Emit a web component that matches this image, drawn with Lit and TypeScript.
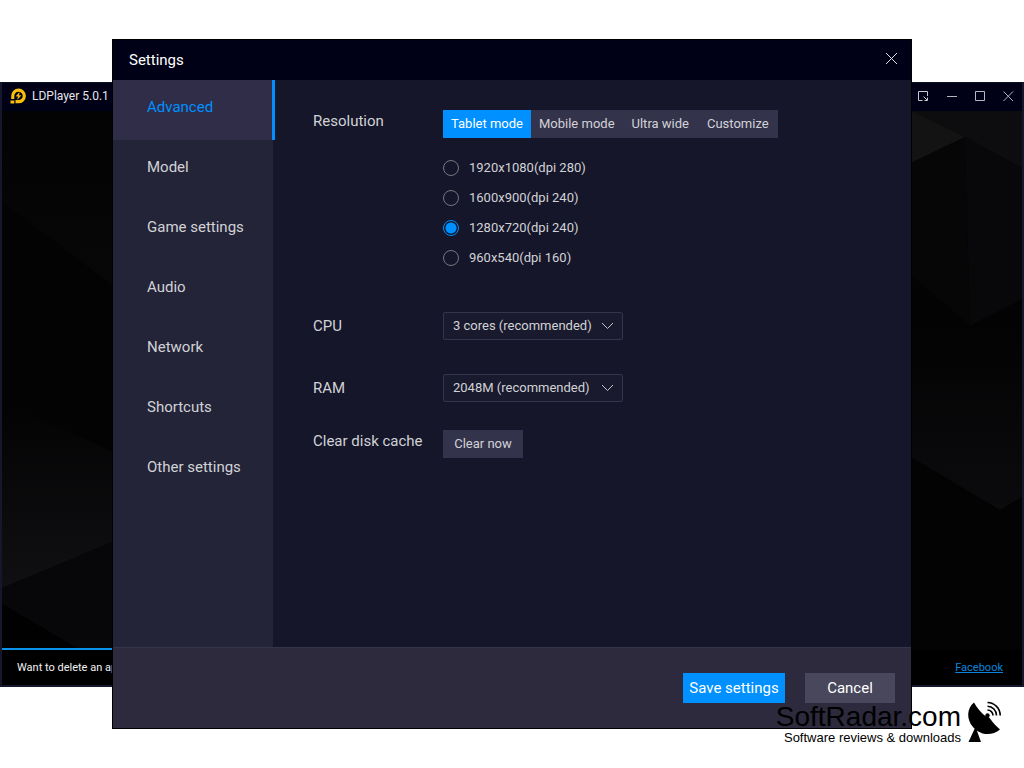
import { LitElement, html, css, svg } from "lit";
import { customElement, state } from "lit/decorators.js";

const SECTIONS = ["Advanced", "Model", "Game settings", "Audio", "Network", "Shortcuts", "Other settings"];
const MODES = ["Tablet mode", "Mobile mode", "Ultra wide", "Customize"];
const RESOLUTIONS = ["1920x1080(dpi 280)", "1600x900(dpi 240)", "1280x720(dpi 240)", "960x540(dpi 160)"];

@customElement("emulator-window")
class EmulatorWindow extends LitElement {
  static styles = css`
    :host { display: block; box-sizing: border-box; background: #000; border: 2px solid #15172c; border-top: 1px solid #0a1420; font: 12px/16px Roboto, sans-serif; color: #e6e6e6; }
    .bar { display: flex; align-items: center; height: 28px; box-sizing: border-box; padding: 0 6px 2px 8px; background: #000016; }
    .logo { width: 16px; height: 16px; display: block; }
    .name { flex: 1; padding-left: 6px; }
    .tools { display: flex; gap: 12px; }
    .tool { border: 0; background: none; padding: 0; width: 16px; height: 16px; }
    .tool svg { display: block; }
    .screen { display: block; width: 100%; height: 539px; background: #030304; }
    .hint { display: flex; justify-content: space-between; align-items: center; height: 35px; padding: 0 19px 0 15px; font-size: 11px; background: #000; color: #f2f2f2; }
    .progress { height: 2px; width: 50%; background: #0a93ea; margin-top: -2px; position: relative; }
    a { color: #0a84dd; }
  `;
  render() {
    return html`
      <header class="bar">
        <svg class="logo" viewBox="0 0 16 16" aria-hidden="true">
          <path fill-rule="evenodd" d="M8.500 0.500a7.300 7.300 0 1 1 0 14.800H5.500v-3.200h3a4.200 4.200 0 1 0-4.200-4.200v3H1.200v-3A7.300 7.300 0 0 1 8.500 0.500zM0.500 12.500h3.800v3H0.500z" fill="#f8bf0c"/>
          <path d="M9.300 4.500L6 8.200h2.200L7.600 11.300 11 7.600H8.800z" fill="#f8bf0c" stroke="#f8bf0c" stroke-width=".4"/>
        </svg>
        <span class="name">LDPlayer 5.0.1</span>
        <div class="tools">
          <button class="tool" aria-label="Resize">${svg`<svg width="16" height="16" viewBox="0 0 16 16" fill="none" stroke="#c8c8d0"><path d="M6.500 12.500H2.500v-9h9V8M7.500 8.500l3.500 3.500M11.500 9.500v3h-3"/></svg>`}</button>
          <button class="tool" aria-label="Minimize">${svg`<svg width="16" height="16" viewBox="0 0 16 16" stroke="#b4b4bc"><path d="M3 8.500h10"/></svg>`}</button>
          <button class="tool" aria-label="Maximize">${svg`<svg width="16" height="16" viewBox="0 0 16 16" fill="none" stroke="#b4b4bc"><path d="M3.500 3.500h9v9h-9z"/></svg>`}</button>
          <button class="tool" aria-label="Close">${svg`<svg width="16" height="16" viewBox="0 0 16 16" stroke="#b4b4bc"><path d="M3.500 3.500l9.500 9.500M13 3.500L3.500 13"/></svg>`}</button>
        </div>
      </header>
      <svg class="screen" viewBox="0 0 1020 538" preserveAspectRatio="none" aria-hidden="true">
        <defs>
          <linearGradient id="a" x1="0" y1="0" x2="0" y2="1"><stop offset="0" stop-color="#030304"/><stop offset="1" stop-color="#101012"/></linearGradient>
          <linearGradient id="b" x1="0" y1="0" x2="0" y2="1"><stop offset="0" stop-color="#030304"/><stop offset="1" stop-color="#0b0b0d"/></linearGradient>
          <linearGradient id="c" x1="0" y1="0" x2="0" y2="1"><stop offset="0" stop-color="#030304"/><stop offset="1" stop-color="#070708"/></linearGradient>
        </defs>
        <path d="M0 0H111V174L0 90z" fill="url(#c)"/>
        <path d="M0 290L111 340V430L0 476z" fill="url(#a)"/>
        <path d="M0 476L111 430V538H78L0 492z" fill="#070709"/>
        <path d="M0 492L78 538H0z" fill="#010101"/>
        <path d="M909 0H1020V57L963 26L909 52z" fill="#0d0d0f"/>
        <path d="M909 0L963 26L909 52z" fill="#131314"/>
        <path d="M909 52L963 26L968 214L909 164z" fill="#060607"/>
        <path d="M963 26L1020 57V188L968 214z" fill="#08080a"/>
        <path d="M909 214H1020V385L998 398L909 345z" fill="url(#b)"/>
      </svg>
      <div class="progress"></div>
      <footer class="hint"><span>Want to delete an app?</span><a href="#facebook">Facebook</a></footer>
    `;
  }
}

@customElement("settings-dialog")
class SettingsDialog extends LitElement {
  @state() section = SECTIONS[0];
  @state() mode = MODES[0];
  @state() resolution = RESOLUTIONS[2];

  static styles = css`
    :host { display: block; box-sizing: border-box; border: 1px solid #000; background: #15162a; color: #d2d2d6; font: 15px/20px Roboto, sans-serif; }
    button, select, input { font: inherit; color: inherit; margin: 0; border: 0; border-radius: 0; }
    .title { display: flex; align-items: center; justify-content: space-between; height: 40px; padding: 0 12px 0 16px; background: #000016; color: #fff; }
    h1 { font: inherit; margin: 0; }
    .close { background: none; padding: 0; width: 16px; height: 16px; }
    .close svg { display: block; }
    .body { display: grid; grid-template-columns: 160px 1fr; min-height: 567px; }
    nav { background: #232438; display: flex; flex-direction: column; }
    .item { height: 60px; padding: 0 0 6px 34px; text-align: left; background: none; }
    .item.on { background: #2f2d47; color: #0090ff; border-right: 3px solid #0090ff; margin-right: -2px; }
    .form { display: grid; grid-template-columns: 130px 1fr; align-content: start; padding: 30px 40px; font-size: 13px; }
    .label { font-size: 15px; line-height: 22px; margin: 0; padding: 0; }
    label.label { line-height: 28px; }
    .modes { display: flex; height: 28px; width: fit-content; background: #34334c; }
    .mode { padding: 0 8px; background: none; }
    .mode.on { background: #0090ff; color: #fff; }
    .mode:nth-child(n + 3) { padding: 0 9px; }
    .radios { display: grid; grid-auto-rows: 30px; padding: 15px 0 39px; }
    .radio { display: flex; align-items: center; gap: 10px; }
    .radio input { appearance: none; width: 16px; height: 16px; box-sizing: border-box; border: 1px solid #77777f; border-radius: 50%; }
    .radio input:checked { border-color: #0090ff; background: radial-gradient(circle, #0090ff 5px, transparent 6px); }
    .pick { display: grid; width: 180px; height: 28px; align-items: center; margin-bottom: 34px; }
    .pick.last { margin-bottom: 28px; }
    .pick select, .pick svg { grid-area: 1 / 1; }
    .pick select { appearance: none; width: 100%; height: 28px; padding: 0 28px 0 9px; background: #191a2d; border: 1px solid #34354a; border-radius: 2px; }
    .pick svg { justify-self: end; margin-right: 9px; pointer-events: none; }
    .clear { width: 80px; height: 28px; padding: 0; background: #34334c; }
    .actions { display: flex; justify-content: flex-end; gap: 20px; padding: 25px 16px; border-top: 1px solid #353448; background: #2c2a3c; color: #fff; }
    .action { height: 30px; padding: 0; width: 90px; background: #48475c; }
    .action.save { width: 102px; background: #0090ff; }
  `;

  select(id: string, label: string, options: string[], last = false) {
    return html`
      <label class="label" for=${id}>${label}</label>
      <div class="pick ${last ? "last" : ""}">
        <select id=${id}>${options.map((o) => html`<option>${o}</option>`)}</select>
        <svg width="13" height="8" viewBox="0 0 13 8" fill="none" stroke="#c4c4cc"><path d="M1 1l5.500 5.500L12 1"/></svg>
      </div>`;
  }

  render() {
    return html`
      <header class="title">
        <h1>Settings</h1>
        <button class="close" aria-label="Close"><svg width="16" height="16" viewBox="0 0 16 16" stroke="#e4e4e8"><path d="M3 1l11 11M14 1L3 12"/></svg></button>
      </header>
      <div class="body">
        <nav>${SECTIONS.map((s) => html`<button class="item ${s === this.section ? "on" : ""}" @click=${() => (this.section = s)}>${s}</button>`)}</nav>
        <section class="form">
          <p class="label">Resolution</p>
          <div>
            <div class="modes">${MODES.map((m) => html`<button class="mode ${m === this.mode ? "on" : ""}" @click=${() => (this.mode = m)}>${m}</button>`)}</div>
            <div class="radios" role="radiogroup" aria-label="Resolution">
              ${RESOLUTIONS.map((r) => html`<label class="radio"><input type="radio" name="resolution" .checked=${r === this.resolution} @change=${() => (this.resolution = r)} />${r}</label>`)}
            </div>
          </div>
          ${this.select("cpu", "CPU", ["3 cores (recommended)"])}
          ${this.select("ram", "RAM", ["2048M (recommended)"], true)}
          <p class="label">Clear disk cache</p>
          <div><button class="clear">Clear now</button></div>
        </section>
      </div>
      <footer class="actions">
        <button class="action save">Save settings</button>
        <button class="action">Cancel</button>
      </footer>
    `;
  }
}

@customElement("app-root")
class AppRoot extends LitElement {
  static styles = css`
    :host { display: block; position: relative; min-height: 100vh; background: #fff; overflow: hidden; }
    emulator-window { margin-top: 82px; }
    settings-dialog { position: absolute; top: 39px; left: 112px; right: 112px; }
    .mark { position: absolute; top: 701px; right: 22px; display: flex; align-items: flex-start; gap: 5px; color: #000; font-family: "Liberation Sans", Arial, sans-serif; text-align: right; }
    .brand { font-size: 28px; line-height: 32px; }
    .tag { font-size: 13px; line-height: 10px; }
  `;
  render() {
    return html`
      <emulator-window></emulator-window>
      <settings-dialog></settings-dialog>
      <div class="mark">
        <div><div class="brand">SoftRadar.com</div><div class="tag">Software reviews &amp; downloads</div></div>
        <svg width="36" height="42" viewBox="0 0 36 42" aria-hidden="true">
          <path d="M8 1.500C1 7 0 18 7 26c8 9 19 9 27 2.500C31 26 27 22 24 17.500L22.500 16 20.500 16C15 12 11 7 8 1.500zM9 27L2.500 41h12.500L11 30z"/>
          <circle cx="21.500" cy="14.500" r="2.200"/>
          <g fill="none" stroke="#000" stroke-width="1.600"><path d="M21.500 1.500A13 13 0 0 1 34.200 14.500M21.500 5.200a9.300 9.300 0 0 1 9 9.300M21.500 9a5.500 5.500 0 0 1 5.500 5.500"/></g>
        </svg>
      </div>
    `;
  }
}
